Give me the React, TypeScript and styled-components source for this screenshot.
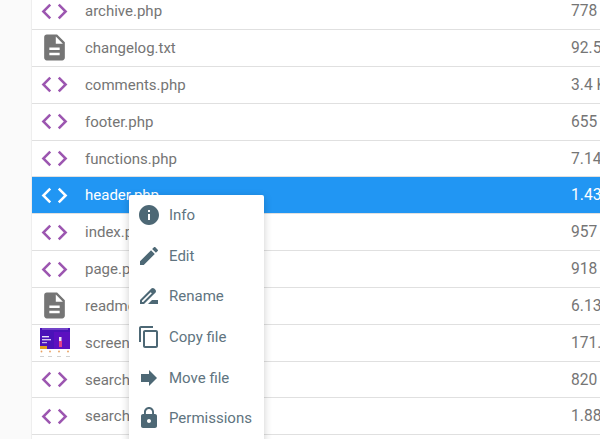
import React from "react";
import styled, { createGlobalStyle } from "styled-components";

const Global = createGlobalStyle`
  html, body {
    margin: 0;
    height: 100%;
    overflow: hidden;
    background: #fafafa;
    font-family: Roboto, "Liberation Sans", sans-serif;
  }
`;

const Page = styled.div`
  position: relative;
  width: 600px;
  height: 439px;
  overflow: hidden;
  padding-left: 31px;
  box-sizing: border-box;
`;

const Table = styled.div`
  width: 640px;
  margin-top: -6.8px;
  padding-bottom: 12px;
  background: #fff;
  border-left: 1px solid #eeeeee;
`;

const Row = styled.div<{ $active?: boolean }>`
  display: grid;
  grid-template-columns: 53px 486px 1fr;
  align-items: center;
  height: 36.85px;
  box-sizing: border-box;
  border-bottom: 1px solid #e0e0e0;
  background: ${(p) => (p.$active ? "#2196f3" : "#fff")};
  color: ${(p) => (p.$active ? "#fff" : "#757575")};
  font-size: 15px;
`;

const IconCell = styled.div`
  display: flex;
  justify-content: center;
  align-items: center;
  padding-right: 9px;
  padding-left: 1px;
`;

const Name = styled.span`
  white-space: nowrap;
`;

const Size = styled.span`
  white-space: nowrap;
  font-size: 15.6px;
`;

const Menu = styled.div`
  position: absolute;
  left: 129px;
  top: 195px;
  width: 135px;
  padding-bottom: 30px;
  background: #fff;
  border-radius: 2px;
  box-shadow: 0 2px 8px rgba(0, 0, 0, 0.2);
`;

const MenuItem = styled.div`
  display: flex;
  align-items: center;
  gap: 8px;
  height: 40.6px;
  padding-left: 8px;
  color: #607480;
  font-size: 15px;
  white-space: nowrap;
`;

const paths = {
  code: "M9.4 16.6L4.8 12l4.6-4.6L8 6l-6 6 6 6 1.4-1.4zm5.2 0l4.6-4.6-4.6-4.6L16 6l6 6-6 6-1.4-1.4z",
  doc: "M14 2H6c-1.1 0-1.99.9-1.99 2L4 20c0 1.1.89 2 1.99 2H18c1.1 0 2-.9 2-2V8l-6-6zm2 16H8v-2h8v2zm0-4H8v-2h8v2zm-3-5V3.5L18.5 9H13z",
  info: "M12 2C6.48 2 2 6.48 2 12s4.48 10 10 10 10-4.48 10-10S17.52 2 12 2zm1 15h-2v-6h2v6zm0-8h-2V7h2v2z",
  edit: "M3 17.25V21h3.75L17.81 9.94l-3.75-3.75L3 17.25zM20.71 7.04c.39-.39.39-1.02 0-1.41l-2.34-2.34c-.39-.39-1.02-.39-1.41 0l-1.83 1.83 3.75 3.75 1.83-1.83z",
  rename: "M18.41 5.8L17.2 4.59c-.78-.78-2.05-.78-2.83 0l-2.68 2.68L3 15.96V20h4.04l8.74-8.74 2.63-2.63c.79-.78.79-2.05 0-2.83zM6.21 18H5v-1.21l8.66-8.66 1.21 1.21L6.21 18zM11 20l4-4h6v4H11z",
  copy: "M16 1H4c-1.1 0-2 .9-2 2v14h2V3h12V1zm3 4H8c-1.1 0-2 .9-2 2v14c0 1.1.9 2 2 2h11c1.1 0 2-.9 2-2V7c0-1.1-.9-2-2-2zm0 16H8V7h11v14z",
  move: "M12 8V4l8 8-8 8v-4H4V8z",
  lock: "M18 8h-1V6c0-2.76-2.24-5-5-5S7 3.24 7 6v2H6c-1.1 0-2 .9-2 2v10c0 1.1.9 2 2 2h12c1.1 0 2-.9 2-2V10c0-1.1-.9-2-2-2zm-6 9c-1.1 0-2-.9-2-2s.9-2 2-2 2 .9 2 2-.9 2-2 2zm3.1-9H8.9V6c0-1.71 1.39-3.1 3.1-3.1 1.71 0 3.1 1.39 3.1 3.1v2z",
};

const Icon = ({ d, size, color }: { d: string; size: number; color: string }) => (
  <svg width={size} height={size} viewBox="0 0 24 24" fill={color} style={{ flex: "none" }}>
    <path d={d} />
  </svg>
);

// tiny picture of the theme screenshot
const Thumb = () => (
  <svg width="30" height="30" viewBox="0 0 30 30">
    <rect width="30" height="30" fill="#fff" />
    <rect width="30" height="21" fill="#4a12b8" />
    <rect x="14" y="4" width="16" height="17" fill="#5c10c0" />
    <rect x="2" y="8" width="7" height="1.4" fill="#e8e0f8" />
    <rect x="2" y="11" width="9" height="1.4" fill="#d8c8f0" />
    <rect x="2" y="14" width="5" height="1.2" fill="#c8b8e8" />
    <rect x="19" y="9" width="2.5" height="7" fill="#f0e0f0" />
    <rect x="19" y="13" width="3" height="6" fill="#e0408a" />
    <rect x="0" y="18" width="7" height="3" fill="#e0a020" />
    <rect x="2" y="0.6" width="26" height="0.8" fill="#b090e0" />
    <circle cx="1.5" cy="23.5" r="0.9" fill="#e8a060" />
    <circle cx="10" cy="23.5" r="0.9" fill="#e8a060" />
    <circle cx="19" cy="23.5" r="0.9" fill="#e8a060" />
    <circle cx="28" cy="23.5" r="0.9" fill="#e8a060" />
    <rect x="0" y="28" width="4" height="0.9" fill="#ccc" />
    <rect x="8" y="28" width="4" height="0.9" fill="#ccc" />
    <rect x="17" y="28" width="4" height="0.9" fill="#ccc" />
    <rect x="26" y="28" width="4" height="0.9" fill="#ccc" />
  </svg>
);

type Kind = "code" | "doc" | "thumb";

const files: { name: string; size: string; kind: Kind; active?: boolean }[] = [
  { name: "archive.php", size: "778 B", kind: "code" },
  { name: "changelog.txt", size: "92.59 KB", kind: "doc" },
  { name: "comments.php", size: "3.4 KB", kind: "code" },
  { name: "footer.php", size: "655 B", kind: "code" },
  { name: "functions.php", size: "7.14 KB", kind: "code" },
  { name: "header.php", size: "1.43 KB", kind: "code", active: true },
  { name: "index.php", size: "957 B", kind: "code" },
  { name: "page.php", size: "918 B", kind: "code" },
  { name: "readme.txt", size: "6.13 KB", kind: "doc" },
  { name: "screenshot.png", size: "171.9 KB", kind: "thumb" },
  { name: "search.php", size: "820 B", kind: "code" },
  { name: "searchform.php", size: "1.88 KB", kind: "code" },
];

const actions: { label: string; d: string }[] = [
  { label: "Info", d: paths.info },
  { label: "Edit", d: paths.edit },
  { label: "Rename", d: paths.rename },
  { label: "Copy file", d: paths.copy },
  { label: "Move file", d: paths.move },
  { label: "Permissions", d: paths.lock },
];

export default function App() {
  return (
    <>
      <Global />
      <Page>
        <Table>
          {files.map((f) => (
            <Row key={f.name} $active={f.active}>
              <IconCell>
                {f.kind === "thumb" ? (
                  <Thumb />
                ) : f.kind === "doc" ? (
                  <Icon d={paths.doc} size={31} color="#757575" />
                ) : (
                  <Icon d={paths.code} size={31} color={f.active ? "#fff" : "#9c56b0"} />
                )}
              </IconCell>
              <Name>{f.name}</Name>
              <Size>{f.size}</Size>
            </Row>
          ))}
        </Table>
        <Menu>
          {actions.map((a) => (
            <MenuItem key={a.label}>
              <Icon d={a.d} size={24} color="#4d6875" />
              {a.label}
            </MenuItem>
          ))}
        </Menu>
      </Page>
    </>
  );
}
